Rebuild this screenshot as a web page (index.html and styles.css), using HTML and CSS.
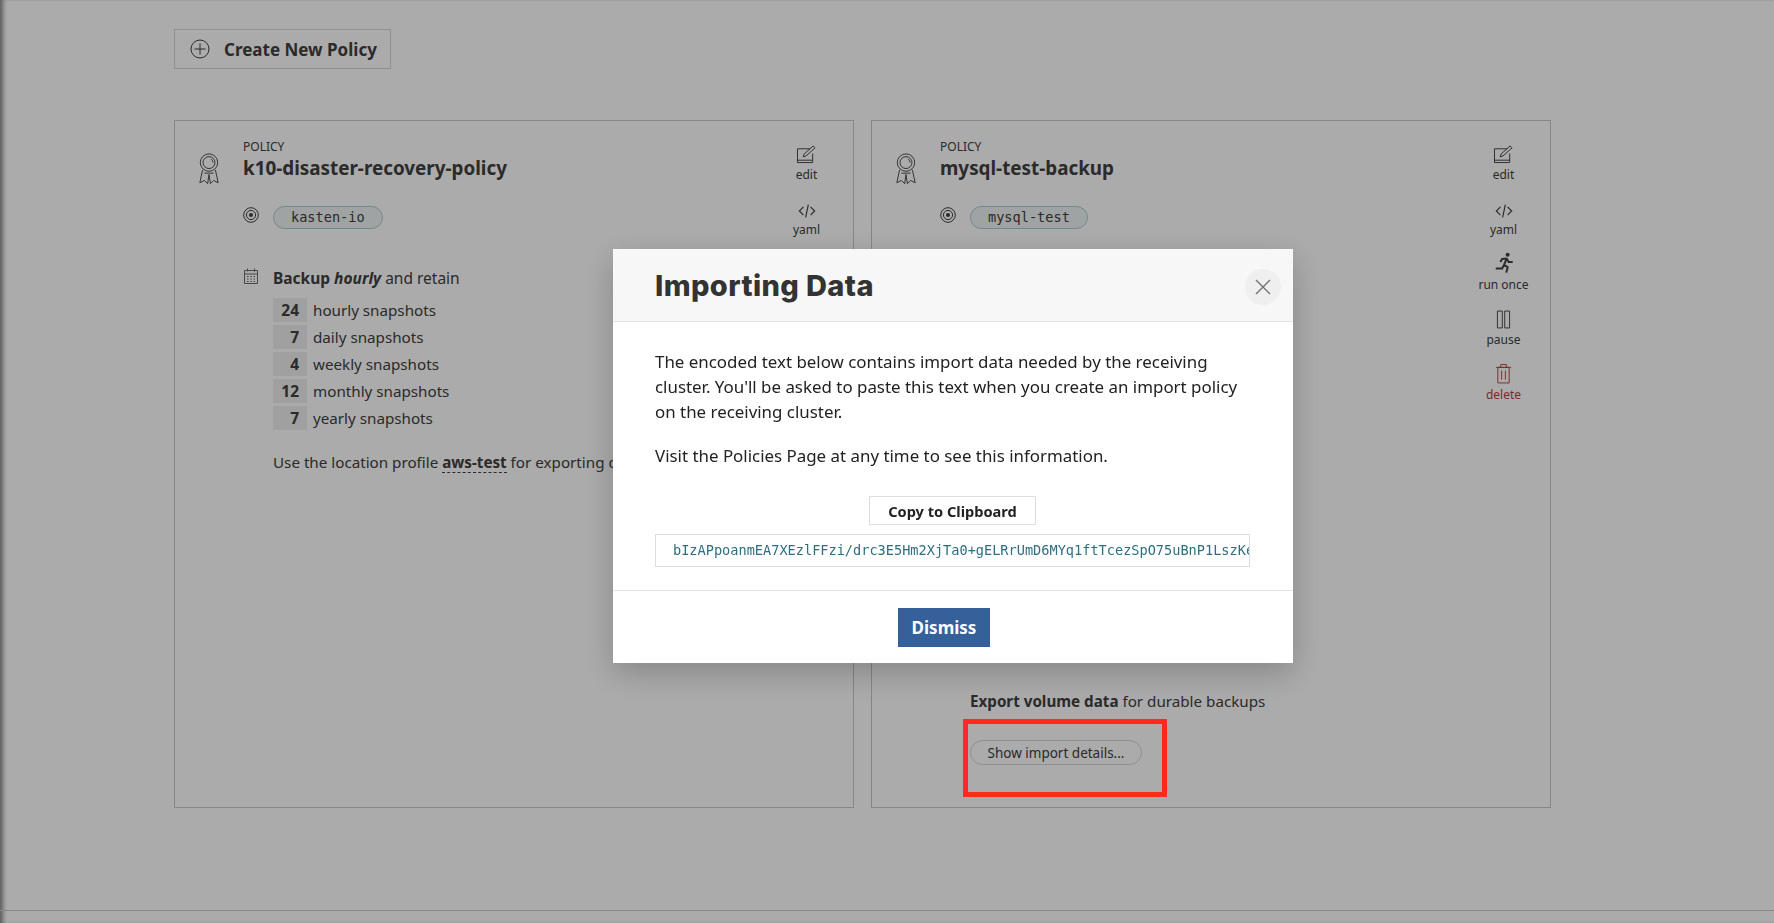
FILE: index.html
```html
<!DOCTYPE html>
<html lang="en">
<head>
    <meta charset="UTF-8">
    <title>Policies</title>
    <link rel="stylesheet" href="styles.css">
</head>
<body>
    <svg class="icon-defs" width="0" height="0">
        <symbol id="i-ribbon" viewBox="0 0 24 34">
            <circle cx="12" cy="10" r="9.5"/>
            <circle cx="12" cy="10" r="6.5"/>
            <path d="M14 6.2a4.5 4.5 0 0 1 2.5 3.8"/>
            <path d="M5 18l-3 14 5-2.500 3.500 3.500 1.500-10 1.500 10 3.500-3.500 5 2.500-3-14"/>
            <path d="M7 21.500h10"/>
        </symbol>
        <symbol id="i-target" viewBox="0 0 16 16">
            <circle cx="8" cy="8" r="7.300"/>
            <circle cx="8" cy="8" r="4.600"/>
            <circle class="solid" cx="8" cy="8" r="2"/>
        </symbol>
        <symbol id="i-calendar" viewBox="0 0 16 16">
            <path d="M1.500 2.500h13v13h-13zM1.500 6h13M4.500.5v3M11.500.5v3"/>
            <path d="M4 8.500h1.500M7.300 8.500h1.500M10.500 8.500h1.500M4 11h1.500M7.300 11h1.500M10.500 11h1.500M4 13.500h1.500M7.300 13.500h1.500M10.500 13.500h1.500"/>
        </symbol>
        <symbol id="i-edit" viewBox="0 0 22 20">
            <path d="M15 4H1.500v14.500h16V9"/>
            <path d="M1.500 16h16"/>
            <path d="M7.500 12.500l1-3L18 1l2 2-9.500 8.500z"/>
        </symbol>
        <symbol id="i-code" viewBox="0 0 20 16">
            <path d="M6 3.500L1.500 8 6 12.500M14 3.500L18.500 8 14 12.500M11.500 1l-3 14"/>
        </symbol>
        <symbol id="i-run" viewBox="0 0 24 24">
            <circle class="solid" cx="16" cy="3" r="2.200"/>
            <path class="thick" d="M15 7l-3 7M15 7l-5 .5-2 3.500M15 7l2 4h4.500M12 14l4 2.500-1.500 6M12 14l-2 4H3"/>
        </symbol>
        <symbol id="i-pause" viewBox="0 0 16 20">
            <path d="M1.500 1h5.200v18H1.500zM9.300 1h5.200v18H9.300z"/>
        </symbol>
        <symbol id="i-trash" viewBox="0 0 18 22">
            <path d="M1 4.500h16M6 4.500V1.500h6v3M3 4.500h12v16.500H3zM7 8v9.500M11 8v9.500"/>
        </symbol>
    </svg>

    <main class="page">
        <button class="create-btn">
            <svg class="create-icon" viewBox="0 0 20 20"><circle cx="10" cy="10" r="9"/><path d="M10 4.500v11M4.500 10h11"/></svg>
            Create New Policy
        </button>

        <div class="cards">
            <section class="card">
                <div class="card-main">
                    <div class="card-head">
                        <svg class="ribbon"><use href="#i-ribbon"/></svg>
                        <div>
                            <div class="eyebrow">POLICY</div>
                            <h2 class="policy-name">k10-disaster-recovery-policy</h2>
                        </div>
                    </div>
                    <div class="target-row">
                        <svg class="row-icon"><use href="#i-target"/></svg>
                        <span class="pill">kasten-io</span>
                    </div>
                    <div class="schedule">
                        <svg class="row-icon cal"><use href="#i-calendar"/></svg>
                        <div>
                            <p class="schedule-title"><b>Backup <i>hourly</i></b> and retain</p>
                            <ul class="retention">
                                <li><b>24</b>hourly snapshots</li>
                                <li><b>7</b>daily snapshots</li>
                                <li><b>4</b>weekly snapshots</li>
                                <li><b>12</b>monthly snapshots</li>
                                <li><b>7</b>yearly snapshots</li>
                            </ul>
                            <p class="note">Use the location profile <b class="dashed">aws-test</b> for exporting data</p>
                        </div>
                    </div>
                </div>
                <div class="actions">
                    <div class="action"><svg class="a-edit"><use href="#i-edit"/></svg>edit</div>
                    <div class="action"><svg class="a-code"><use href="#i-code"/></svg>yaml</div>
                </div>
            </section>

            <section class="card">
                <div class="card-main">
                    <div class="card-head">
                        <svg class="ribbon"><use href="#i-ribbon"/></svg>
                        <div>
                            <div class="eyebrow">POLICY</div>
                            <h2 class="policy-name">mysql-test-backup</h2>
                        </div>
                    </div>
                    <div class="target-row">
                        <svg class="row-icon"><use href="#i-target"/></svg>
                        <span class="pill">mysql-test</span>
                    </div>
                    <div class="export-block">
                        <p class="export-line"><b>Export volume data</b> for durable backups</p>
                        <button class="details-btn">Show import details...</button>
                    </div>
                </div>
                <div class="actions">
                    <div class="action"><svg class="a-edit"><use href="#i-edit"/></svg>edit</div>
                    <div class="action"><svg class="a-code"><use href="#i-code"/></svg>yaml</div>
                    <div class="action"><svg class="a-run"><use href="#i-run"/></svg>run once</div>
                    <div class="action"><svg class="a-pause"><use href="#i-pause"/></svg>pause</div>
                    <div class="action danger"><svg class="a-trash"><use href="#i-trash"/></svg>delete</div>
                </div>
            </section>
        </div>
    </main>
    <footer class="page-footer"></footer>

    <div class="overlay">
        <div class="modal">
            <header class="modal-head">
                <h1>Importing Data</h1>
                <button class="close-btn" aria-label="Close">
                    <svg viewBox="0 0 16 16"><path d="M1 1l14 14M15 1L1 15"/></svg>
                </button>
            </header>
            <div class="modal-body">
                <p>The encoded text below contains import data needed by the receiving cluster. You'll be asked to paste this text when you create an import policy on the receiving cluster.</p>
                <p>Visit the Policies Page at any time to see this information.</p>
                <div class="copy-wrap"><button class="copy-btn">Copy to Clipboard</button></div>
                <div class="encoded">bIzAPpoanmEA7XEzlFFzi/drc3E5Hm2XjTa0+gELRrUmD6MYq1ftTcezSpO75uBnP1LszKe</div>
            </div>
            <footer class="modal-foot">
                <button class="dismiss-btn">Dismiss</button>
            </footer>
        </div>
    </div>

    <div class="highlight"></div>
</body>
</html>
```

FILE: styles.css
```css
* {
    box-sizing: border-box;
}

html, body {
    height: 100%;
}

body {
    margin: 0;
    height: 923px;
    overflow: hidden;
    background: #ffffff;
    color: #404040;
    font-family: "Noto Sans", "Open Sans", sans-serif;
    font-size: 15.2px;
    display: flex;
    flex-direction: column;
    box-shadow: inset 5px 0 4px -2px rgba(0, 0, 0, 0.45);
}

.icon-defs {
    position: absolute;
}

symbol {
    overflow: visible;
}

svg {
    fill: none;
    stroke: currentColor;
    stroke-width: 1;
}

symbol .solid {
    fill: currentColor;
    stroke: none;
}

symbol .thick {
    stroke-width: 2.2;
}

p {
    margin: 0;
}

button {
    font-family: inherit;
    cursor: pointer;
}

.page {
    flex: 1;
    padding: 29px 0 0 174px;
}

.create-btn {
    display: flex;
    align-items: center;
    width: 217px;
    height: 40px;
    padding: 0 0 0 15px;
    background: #ffffff;
    border: 1px solid #d6d6d6;
    color: #404040;
    font-size: 17px;
    font-weight: 700;
}

.create-icon {
    width: 20px;
    height: 20px;
    margin-right: 14px;
}

.cards {
    display: flex;
    gap: 17px;
    margin-top: 51px;
}

.card {
    display: flex;
    width: 680px;
    height: 688px;
    padding: 17px 0 0 20px;
    border: 1px solid #c8c8c8;
}

.card-main {
    flex: 1;
    min-width: 0;
}

.card-head {
    display: flex;
}

.ribbon {
    width: 22px;
    height: 32px;
    margin: 15px 23px 0 3px;
    flex-shrink: 0;
}

.eyebrow {
    font-size: 12px;
    line-height: 17px;
}

.policy-name {
    margin: 0;
    font-size: 18.85px;
    line-height: 26px;
    font-weight: 700;
}

.target-row {
    display: flex;
    align-items: flex-start;
    margin: 21px 0 0 48px;
}

.row-icon {
    width: 16px;
    height: 16px;
    margin-top: 1px;
    margin-right: 14px;
    flex-shrink: 0;
}

.pill {
    display: block;
    height: 23px;
    padding: 0 17px;
    border: 1px solid #a8cdd4;
    border-radius: 12px;
    background: #eef3f4;
    font-family: "DejaVu Sans Mono", monospace;
    font-size: 13.6px;
    line-height: 21px;
    text-align: center;
}

.cal {
    color: #6a6a6a;
}

.schedule {
    display: flex;
    margin: 38px 0 0 48px;
}

.schedule-title {
    font-size: 15.5px;
    line-height: 22px;
}

.retention {
    list-style: none;
    margin: 9px 0 0;
    padding: 0;
}

.retention li {
    display: flex;
    align-items: center;
    height: 24px;
    margin-bottom: 3px;
}

.retention b {
    width: 34px;
    height: 24px;
    margin-right: 6px;
    padding-right: 8px;
    background: #efefef;
    font-size: 15.5px;
    line-height: 24px;
    text-align: right;
}

.note {
    width: 340px;
    margin-top: 20.5px;
    line-height: 22px;
    white-space: nowrap;
    overflow: hidden;
}

.dashed {
    border-bottom: 1px dashed #404040;
}

.export-block {
    margin: 461px 0 0 78px;
}

.export-line {
    line-height: 22px;
}

.details-btn {
    display: block;
    width: 172px;
    height: 25px;
    margin-top: 28px;
    padding: 0;
    border: 1px solid #d6d6d6;
    border-radius: 13px;
    background: #ffffff;
    color: #404040;
    font-size: 13.5px;
}

.actions {
    display: flex;
    flex-direction: column;
    width: 94px;
    padding-left: 1px;
    flex-shrink: 0;
}

.action {
    display: flex;
    flex-direction: column;
    align-items: center;
    justify-content: flex-end;
    height: 55px;
    font-size: 12px;
    line-height: 16px;
}

.action:first-child {
    height: 44.5px;
}

.action svg {
    margin-bottom: 3px;
}

.a-edit {
    width: 21px;
    height: 19px;
}

.a-code {
    width: 18px;
    height: 16px;
    stroke-width: 1.3;
}

.a-run {
    width: 22px;
    height: 22px;
}

.a-pause {
    width: 15px;
    height: 19px;
}

.a-trash {
    width: 17px;
    height: 21px;
}

.action.danger {
    color: #b8423c;
}

.page-footer {
    height: 13px;
    border-top: 1px solid #c8c8c8;
}

.overlay {
    position: fixed;
    inset: 0;
    display: flex;
    justify-content: center;
    align-items: flex-start;
    padding: 249px 0 0 132px;
    background: rgba(0, 0, 0, 0.33);
}

.modal {
    width: 680px;
    background: #ffffff;
    color: #222222;
    box-shadow: 0 10px 30px rgba(0, 0, 0, 0.22);
}

.modal-head {
    display: flex;
    align-items: center;
    justify-content: space-between;
    height: 73px;
    padding: 0 12px 0 42px;
    background: #f7f7f7;
    border-bottom: 1px solid #e3e3e3;
}

.modal-head h1 {
    margin: 0;
    font-family: Inter, sans-serif;
    font-size: 29px;
    font-weight: 800;
    letter-spacing: 0.4px;
    color: #333333;
}

.close-btn {
    width: 36px;
    height: 36px;
    margin-top: 4px;
    padding: 10px;
    border: none;
    border-radius: 50%;
    background: #efefef;
    color: #6e7478;
    display: flex;
}

.close-btn svg {
    width: 16px;
    height: 16px;
    stroke-width: 1.4;
}

.modal-body {
    height: 269px;
    padding: 27px 43px 0 42px;
    font-size: 16.9px;
    line-height: 25px;
    border-bottom: 1px solid #e3e3e3;
}

.modal-body p + p {
    margin-top: 19px;
}

.copy-wrap {
    display: flex;
    justify-content: center;
    margin-top: 28px;
}

.copy-btn {
    width: 167px;
    height: 29px;
    padding: 0;
    background: #ffffff;
    border: 1px solid #dddddd;
    color: #222222;
    font-size: 14.6px;
    font-weight: 700;
}

.encoded {
    height: 33px;
    margin-top: 9px;
    padding: 0 0 0 17px;
    border: 1px solid #dddddd;
    color: #2f6f80;
    font-family: "DejaVu Sans Mono", monospace;
    font-size: 13.6px;
    line-height: 31px;
    white-space: nowrap;
    overflow: hidden;
}

.modal-foot {
    display: flex;
    justify-content: center;
    height: 72px;
    padding: 17px 18px 0 0;
}

.dismiss-btn {
    width: 92px;
    height: 39px;
    padding: 0;
    border: none;
    background: #35609a;
    color: #ffffff;
    font-size: 17px;
    font-weight: 700;
}

.highlight {
    position: fixed;
    left: 963px;
    top: 719px;
    width: 204px;
    height: 78px;
    border: 5px solid #ff2a1f;
}
```
